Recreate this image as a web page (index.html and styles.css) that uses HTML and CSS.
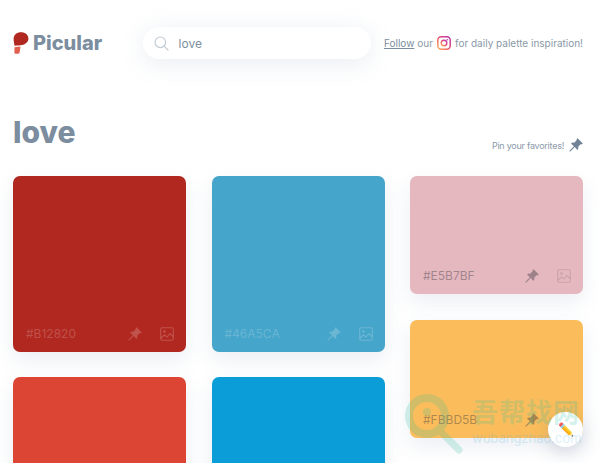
FILE: index.html
```html
<!DOCTYPE html>
<html lang="en">
<head>
    <meta charset="UTF-8">
    <title>Picular</title>
    <link rel="stylesheet" href="styles.css">
</head>
<body>
    <header class="topbar">
        <a class="brand" href="#">
            <svg class="brand-mark" width="16" height="22" viewBox="0 0 16 22">
                <path d="M.6 6.800C.6 2.800 3.800.2 8 .2c4.300 0 7.400 2.700 7.400 6.300 0 3.500-2.900 5.900-6.400 6.500-2.200.4-4 .4-7.400.8C1 11 .6 9.200.6 6.800z" fill="#b12820"/>
                <path d="M1.500 15.200c2.300-.3 4-.4 6-.7-.2 2.100-.5 4.200-.9 6.100-.2.800-.8 1.200-1.600 1.200H3c-1 0-1.600-.6-1.600-1.600z" fill="#e0604f"/>
            </svg>
            <span class="brand-name">Picular</span>
        </a>
        <div class="search">
            <svg class="search-icon" width="15" height="15" viewBox="0 0 15 15" fill="none" stroke="#c4ccd3" stroke-width="1.200">
                <circle cx="6.300" cy="6.300" r="5.300"/>
                <path d="M10.200 10.200L14 14" stroke-linecap="round"/>
            </svg>
            <span class="search-text">love</span>
        </div>
        <p class="follow">
            <a href="#">Follow</a> <span>our</span>
            <svg class="insta" width="14" height="14" viewBox="0 0 14 14" fill="none">
                <defs>
                    <linearGradient id="ig" x1="0" y1="1" x2="1" y2="0">
                        <stop offset="0" stop-color="#fdb45a"/>
                        <stop offset="0.5" stop-color="#ee4d6e"/>
                        <stop offset="1" stop-color="#b436b0"/>
                    </linearGradient>
                </defs>
                <rect x="0.800" y="0.800" width="12.400" height="12.400" rx="3.400" stroke="url(#ig)" stroke-width="1.500"/>
                <circle cx="7" cy="7" r="2.800" stroke="url(#ig)" stroke-width="1.400"/>
                <circle cx="10.300" cy="3.700" r="0.800" fill="#c8389c"/>
            </svg>
            <span>for daily palette inspiration!</span>
        </p>
    </header>

    <main class="content">
        <div class="title-row">
            <h1>love</h1>
            <div class="pin-hint">
                Pin your favorites!
                <svg class="pin" width="14" height="14" viewBox="0 0 14 14"><use href="#pin-shape"/></svg>
            </div>
        </div>

        <div class="columns">
            <div class="column">
                <div class="card tall light" style="background:#b12820">
                    <span class="hex">#B12820</span>
                    <svg class="pin" width="14" height="14" viewBox="0 0 14 14"><use href="#pin-shape"/></svg>
                    <svg class="pic" width="14" height="14" viewBox="0 0 14 14"><use href="#pic-shape"/></svg>
                </div>
                <div class="card tall" style="background:#dc4433"></div>
            </div>
            <div class="column">
                <div class="card tall light" style="background:#46a5ca">
                    <span class="hex">#46A5CA</span>
                    <svg class="pin" width="14" height="14" viewBox="0 0 14 14"><use href="#pin-shape"/></svg>
                    <svg class="pic" width="14" height="14" viewBox="0 0 14 14"><use href="#pic-shape"/></svg>
                </div>
                <div class="card tall" style="background:#0a9dd8"></div>
            </div>
            <div class="column column-short">
                <div class="card short dark" style="background:#e5b7bf">
                    <span class="hex">#E5B7BF</span>
                    <svg class="pin" width="14" height="14" viewBox="0 0 14 14"><use href="#pin-shape"/></svg>
                    <svg class="pic" width="14" height="14" viewBox="0 0 14 14"><use href="#pic-shape"/></svg>
                </div>
                <div class="card short dark" style="background:#fbbd5b">
                    <span class="hex">#FBBD5B</span>
                    <svg class="pin" width="14" height="14" viewBox="0 0 14 14"><use href="#pin-shape"/></svg>
                    <svg class="pic" width="14" height="14" viewBox="0 0 14 14"><use href="#pic-shape"/></svg>
                </div>
            </div>
        </div>
    </main>

    <button class="edit-button">✏️</button>

    <!-- watermark baked into the shot -->
    <div class="watermark">
        <svg class="watermark-glass" width="62" height="62" viewBox="0 0 62 62" fill="none" stroke="#2fbf9f">
            <circle cx="24" cy="24" r="18" stroke-width="8"/>
            <circle cx="24" cy="20" r="4" fill="#2fbf9f" stroke="none"/>
            <path d="M38 40L56 58" stroke-width="7" stroke-linecap="round"/>
        </svg>
        <div class="watermark-text">
            <span class="watermark-cn">吾帮找网</span>
            <span class="watermark-url">wubangzhao.com</span>
        </div>
    </div>

    <svg class="defs" width="0" height="0">
        <symbol id="pin-shape" viewBox="0 0 14 14">
            <path d="M8.600.2l5.200 5.200-1 1-.9-.3-2.600 2.500c.3 1.300 0 2.500-.8 3.300L5.700 9.100 1 13.700.3 13 4.900 8.300 2 5.500c.8-.8 2-1.100 3.300-.8l2.500-2.600-.3-.9z" fill="currentColor"/>
        </symbol>
        <symbol id="pic-shape" viewBox="0 0 14 14">
            <rect x="0.700" y="0.700" width="12.600" height="12.600" rx="1.500" fill="none" stroke="currentColor" stroke-width="1.100"/>
            <circle cx="4.500" cy="4.500" r="1.300" fill="currentColor"/>
            <path d="M1 11l3.500-3 2.500 2 3-3.500 3 3" fill="none" stroke="currentColor" stroke-width="1.100"/>
        </symbol>
    </svg>
</body>
</html>
```

FILE: styles.css
```css
html, body {
    height: 100%;
}

body {
    margin: 0;
    overflow: hidden;
    background: #fff;
    font-family: 'Inter', 'Lato', sans-serif;
    color: #8a99a8;
}

.topbar {
    display: flex;
    align-items: center;
    padding: 13px 17px 0 13px;
    box-sizing: border-box;
    height: 73px;
}

.brand {
    display: flex;
    align-items: center;
    gap: 4px;
    width: 130px;
    text-decoration: none;
}

.brand-name {
    font-size: 20px;
    font-weight: 800;
    color: #7b8d9e;
}

.search {
    display: flex;
    align-items: center;
    gap: 10px;
    width: 229px;
    height: 32px;
    padding-left: 11px;
    box-sizing: border-box;
    border-radius: 16px;
    background: #fff;
    box-shadow: 0 4px 24px rgba(130, 150, 180, 0.18);
}

.search-text {
    font-size: 12px;
    color: #7b8d9e;
}

.follow {
    display: flex;
    align-items: center;
    gap: 3px;
    margin: 0 0 0 13px;
    font-size: 10px;
    white-space: nowrap;
}

.follow a {
    color: #7b8d9e;
}

.insta {
    margin: 0 1px;
}

.content {
    padding: 0 17px 0 13px;
}

.title-row {
    display: flex;
    justify-content: space-between;
    align-items: flex-end;
    height: 103px;
    padding-bottom: 24px;
    box-sizing: border-box;
}

h1 {
    margin: 0;
    font-size: 30px;
    font-weight: 800;
    line-height: 40px;
    color: #7b8d9e;
}

.pin-hint {
    display: flex;
    align-items: center;
    gap: 5px;
    font-size: 9px;
    letter-spacing: -0.25px;
    color: #8a99a8;
}

.pin-hint .pin {
    color: #6f8296;
}

.columns {
    display: grid;
    grid-template-columns: repeat(3, 173px);
    gap: 25.5px;
}

.column {
    display: flex;
    flex-direction: column;
    gap: 25px;
}

.column-short {
    gap: 26px;
}

.card {
    display: flex;
    align-items: flex-end;
    padding: 0 12px 11px 13px;
    box-sizing: border-box;
    border-radius: 7px;
    box-shadow: 0 8px 20px rgba(130, 150, 180, 0.16);
}

.tall {
    height: 176px;
}

.short {
    height: 118px;
}

.hex {
    flex: 1;
    font-size: 12px;
    line-height: 15px;
}

.pic {
    margin-left: 18px;
}

/* text and icons take a tint of the card colour */
.light {
    color: rgba(255, 255, 255, 0.2);
}

.dark {
    color: rgba(50, 50, 60, 0.4);
}

.dark .pic {
    opacity: 0.35;
}

.edit-button {
    position: absolute;
    left: 548px;
    top: 412px;
    width: 35px;
    height: 35px;
    padding: 0;
    border: none;
    border-radius: 50%;
    background: #fff;
    box-shadow: 0 6px 18px rgba(100, 120, 150, 0.25);
    font-size: 13px;
}

.watermark {
    position: absolute;
    left: 403px;
    top: 392px;
    display: flex;
    gap: 7px;
    opacity: 0.2;
    pointer-events: none;
}

.watermark-text {
    display: flex;
    flex-direction: column;
    gap: 6px;
    margin-top: 5px;
}

.watermark-cn {
    font-family: 'Noto Sans CJK SC', sans-serif;
    font-size: 26px;
    font-weight: 700;
    line-height: 28px;
    letter-spacing: 1px;
    color: #2fbf9f;
}

.watermark-url {
    font-size: 13px;
    line-height: 14px;
    white-space: nowrap;
    color: #4ab0d8;
}

.defs {
    position: absolute;
}
```
